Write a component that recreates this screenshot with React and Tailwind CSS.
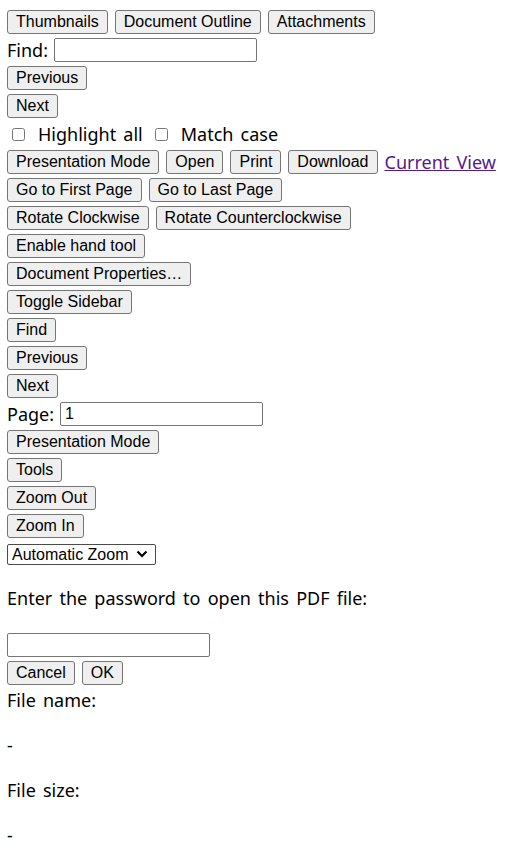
import React from "react";

// unstyled viewer controls, one control row per line
const btn =
  "h-[24px] px-[8px] border border-[#767676] rounded-[3px] bg-[#efefef] text-[16px] leading-[20px] text-black font-['Liberation_Sans',Arial,sans-serif] whitespace-nowrap [word-spacing:0px]";

function Btn({ children }) {
  return (
    <button type="button" className={btn}>
      {children}
    </button>
  );
}

function Row({ children, gap = "gap-[7px]" }) {
  return <div className={`h-[28px] flex items-center ${gap}`}>{children}</div>;
}

const field =
  "h-[24px] border border-[#767676] rounded-[2px] bg-white px-[4px] text-[16px] text-black font-['Liberation_Sans',Arial,sans-serif] outline-none";

export default function App() {
  return (
    <div className="min-h-[867px] bg-white text-black text-[18px] font-['Noto_Sans',sans-serif] [word-spacing:2.5px] px-[7px] pt-[8px]">
      <Row>
        <Btn>Thumbnails</Btn>
        <Btn>Document Outline</Btn>
        <Btn>Attachments</Btn>
      </Row>

      <Row gap="gap-[6px]">
        <span>Find:</span>
        <input type="text" className={`${field} w-[203px]`} />
      </Row>
      <Row>
        <Btn>Previous</Btn>
      </Row>
      <Row>
        <Btn>Next</Btn>
      </Row>

      <Row gap="gap-0">
        <input type="checkbox" className="w-[13px] h-[13px] ml-[5px] mr-[13px]" />
        <span>Highlight all</span>
        <input type="checkbox" className="w-[13px] h-[13px] ml-[12px] mr-[13px]" />
        <span>Match case</span>
      </Row>

      <Row>
        <Btn>Presentation Mode</Btn>
        <Btn>Open</Btn>
        <Btn>Print</Btn>
        <Btn>Download</Btn>
        <a href="#" className="text-[#551a8b] underline">
          Current View
        </a>
      </Row>
      <Row>
        <Btn>Go to First Page</Btn>
        <Btn>Go to Last Page</Btn>
      </Row>
      <Row>
        <Btn>Rotate Clockwise</Btn>
        <Btn>Rotate Counterclockwise</Btn>
      </Row>
      <Row>
        <Btn>Enable hand tool</Btn>
      </Row>
      <Row>
        <Btn>Document Properties…</Btn>
      </Row>
      <Row>
        <Btn>Toggle Sidebar</Btn>
      </Row>
      <Row>
        <Btn>Find</Btn>
      </Row>
      <Row>
        <Btn>Previous</Btn>
      </Row>
      <Row>
        <Btn>Next</Btn>
      </Row>

      <Row gap="gap-[6px]">
        <span>Page:</span>
        <input type="text" defaultValue="1" className={`${field} w-[203px]`} />
      </Row>
      <Row>
        <Btn>Presentation Mode</Btn>
      </Row>
      <Row>
        <Btn>Tools</Btn>
      </Row>
      <Row>
        <Btn>Zoom Out</Btn>
      </Row>
      <Row>
        <Btn>Zoom In</Btn>
      </Row>

      <Row>
        <label className="h-[21px] w-[149px] flex items-center border border-[#4b4b4b] rounded-[2px] bg-white pl-[4px] pr-[7px] [word-spacing:0px]">
          <select className="appearance-none flex-1 bg-transparent text-[16px] leading-[19px] outline-none font-['Liberation_Sans',Arial,sans-serif]">
            <option>Automatic Zoom</option>
          </select>
          <svg width="12" height="8" viewBox="0 0 12 8" className="shrink-0">
            <path d="M1.5 1.5 L6 6 L10.5 1.5" fill="none" stroke="black" strokeWidth="2.2" />
          </svg>
        </label>
      </Row>

      <p className="mt-[17px] leading-[27px]">Enter the password to open this PDF file:</p>

      <div className="mt-[19px] h-[28px] flex items-center">
        <input type="password" className={`${field} w-[203px]`} />
      </div>
      <Row>
        <Btn>Cancel</Btn>
        <Btn>OK</Btn>
      </Row>

      <p className="leading-[27px]">File name:</p>
      <p className="mt-[18px] leading-[27px]">-</p>
      <p className="mt-[18px] leading-[27px]">File size:</p>
      <p className="mt-[18px] leading-[27px]">-</p>
    </div>
  );
}
